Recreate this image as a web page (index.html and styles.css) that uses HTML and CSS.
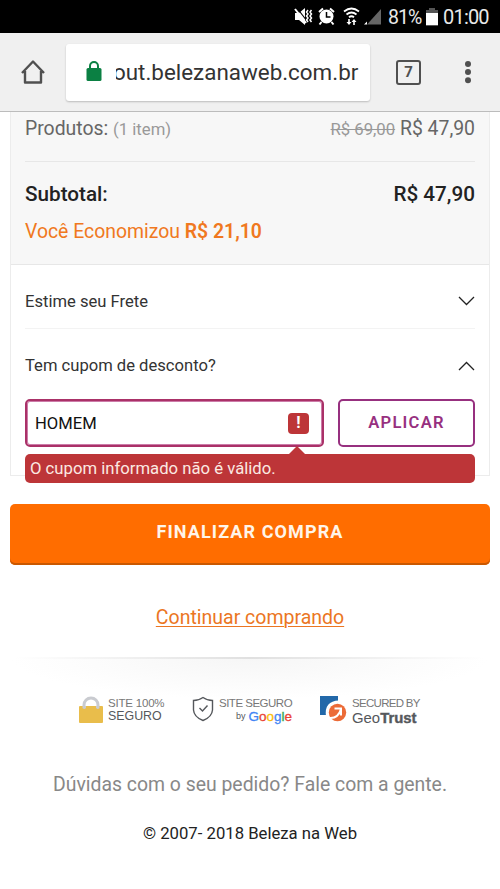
FILE: index.html
```html
<!DOCTYPE html>
<html lang="pt-BR">
<head>
<meta charset="utf-8">
<title>Beleza na Web</title>
<link rel="stylesheet" href="styles.css">
</head>
<body>
<header class="status">
  <svg class="status-icons" width="92" height="20" viewBox="0 0 92 20">
    <g fill="#fff">
      <path d="M1 6h4l6-5v17l-6-5H1z"/>
      <path d="M3 1l10 13" stroke="#000" stroke-width="1.200"/>
      <path d="M1 2l11 14" stroke="#fff" stroke-width="2"/>
      <path d="M14 3l-1.500 2 1.500 2-1.500 2 1.500 2-1.500 2 1.500 2M17.500 3l-1.500 2 1.500 2-1.500 2 1.500 2-1.500 2 1.500 2" fill="none" stroke="#fff" stroke-width="1.500"/>
      <circle cx="32.500" cy="9.500" r="7"/>
      <path d="M25 5l4-3.500M40 5l-4-3.500M27.500 15l-2 2.500M37.500 15l2 2.500" stroke="#fff" stroke-width="2"/>
      <path d="M32.500 5v5h4" fill="none" stroke="#000" stroke-width="1.500"/>
      <path d="M50 4.500q7.500-6 15 0M52.500 7.500q5-4 10 0M55 10.300q2.500-2 5 0" fill="none" stroke="#fff" stroke-width="1.800"/>
      <path d="M52.500 15h1.700v-3h1.600v3h1.700L55 18zM57.500 15l2.500-3 2.500 3h-1.700v3h-1.600v-3z"/>
      <path d="M73 17.500L87 2v15.500z" fill="#666"/>
      <path d="M70 17.500l3-3v3z"/>
    </g>
  </svg>
  <span class="percent">81%</span>
  <svg class="battery" width="12" height="18" viewBox="0 0 12 18"><path d="M0 2h3V0h6v2h3v16H0z" fill="#555"/><path d="M0 5h12v12H0z" fill="#fff"/></svg>
  <span class="clock">01:00</span>
</header>
<nav class="toolbar">
  <svg class="home" width="26" height="26" viewBox="0 0 26 26"><path d="M2 14L13 2.500 24 14M5 12v11.500h16V12" fill="none" stroke="#505050" stroke-width="2.400" stroke-linejoin="round"/></svg>
  <div class="address">
    <svg class="lock" width="16" height="20" viewBox="0 0 16 20"><path d="M4 9V5a4 4 0 0 1 8 0v4" fill="none" stroke="#0b8043" stroke-width="2"/><rect x=".5" y="7" width="15" height="13" rx="1.500" fill="#0b8043"/></svg>
    <span class="url">out.belezanaweb.com.br</span>
  </div>
  <span class="tabs">7</span>
  <svg class="menu" width="8" height="24" viewBox="0 0 8 24" fill="#505050"><circle cx="4" cy="4" r="3"/><circle cx="4" cy="12" r="3"/><circle cx="4" cy="20.300" r="3"/></svg>
</nav>
<main>
  <section class="card">
    <div class="summary">
      <div class="row products"><span class="label">Produtos: <small>(1 item)</small></span><span class="amount"><s>R$ 69,00</s> R$ 47,90</span></div>
      <div class="row subtotal"><span class="sub-label">Subtotal:</span><span class="sub-value">R$ 47,90</span></div>
      <p class="savings">Você Economizou <b>R$ 21,10</b></p>
    </div>
    <div class="options">
      <div class="row option shipping"><span class="ship-label">Estime seu Frete</span><svg width="17" height="10" viewBox="0 0 17 10"><path d="M1 1l7.500 7.500L16 1"/></svg></div>
      <div class="row option coupon"><span class="coupon-label">Tem cupom de desconto?</span><svg width="17" height="10" viewBox="0 0 17 10"><path d="M1 9l7.500-7.500L16 9"/></svg></div>
      <div class="form">
        <div class="field"><span class="code">HOMEM</span><span class="alert">!</span></div>
        <button class="apply"><span>APLICAR</span></button>
      </div>
      <div class="error"><span>O cupom informado não é válido.</span></div>
    </div>
  </section>
  <button class="checkout"><span>FINALIZAR COMPRA</span></button>
  <div class="continue"><a>Continuar comprando</a></div>
</main>
<footer>
  <div class="seals">
    <div class="seal safe">
      <svg width="24" height="28" viewBox="0 0 24 28"><path d="M5 13V9a7 7 0 0 1 14 0v4" fill="none" stroke="#c9cbd0" stroke-width="3"/><rect y="10" width="24" height="17" rx="1" fill="#e9bd4b"/><path d="M3.500 10v2q2 2 3.500 0v-2M17 10v2q2 2 3.500 0v-2" fill="#c9cbd0"/></svg>
      <div class="seal-text"><span class="s1">SITE 100%</span><span class="s2">SEGURO</span></div>
    </div>
    <div class="seal google">
      <svg width="22" height="26" viewBox="0 0 22 26" fill="none" stroke="#55585c" stroke-width="1.400"><path d="M11 1.500Q15 4.500 20.500 4.500V14Q20 21 11 24.500 2 21 1.500 14V4.500Q7 4.500 11 1.500zM7.500 12l3 3 5-5.500"/></svg>
      <div class="seal-text"><span class="s3">SITE SEGURO</span><span class="s4"><small>by</small><span class="logo"><i class="b">G</i><i class="r">o</i><i class="y">o</i><i class="b">g</i><i class="g">l</i><i class="r">e</i></span></span></div>
    </div>
    <div class="seal geo">
      <svg width="27" height="26" viewBox="0 0 27 26"><path d="M0 0h18v5Q7 6 7 19H0z" fill="#2268a9"/><path d="M7 20Q5 6 19 5.500" fill="none" stroke="#fff" stroke-width="2"/><circle cx="17.500" cy="16.500" r="8.700" fill="#ec6b37"/><path d="M9 22q9 1 12-9M14.500 12.500H21v7" fill="none" stroke="#fff" stroke-width="2"/></svg>
      <div class="seal-text"><span class="s5">SECURED BY</span><span class="s6">Geo<b>Trust</b></span></div>
    </div>
  </div>
  <p class="help"><span>Dúvidas com o seu pedido? Fale com a gente.</span></p>
  <p class="copy"><span>© 2007- 2018 Beleza na Web</span></p>
</footer>
</body>
</html>
```
FILE: styles.css
```css
* { box-sizing: border-box; }
body { margin: 0; width: 500px; height: 889px; overflow: hidden; background: #fff; color: #222; font-family: Roboto, sans-serif; }
p { margin: 0; }
svg { flex: none; display: block; }
button { font-family: inherit; margin: 0; padding: 0; }
span, a { white-space: nowrap; }

.status { height: 33px; background: #000; color: #e9e9e9; display: flex; align-items: center; padding: 1px 0 0 294px; font-size: 20px; }
.percent { margin-left: 2px; width: 38px; font-size: 19.500px; letter-spacing: -.9px; }
.clock { margin-left: 5px; letter-spacing: -.8px; }

.toolbar { height: 79px; padding-left: 20px; display: flex; align-items: center; background: #f0f0f0; border-bottom: 1px solid #bcbcbc; }
.address { width: 304px; height: 57px; margin-left: 20px; padding-left: 20px; display: flex; align-items: center; background: #fff; border-radius: 3px; box-shadow: 0 1px 2px rgba(0,0,0,.22); }
.lock { margin-top: -2px; }
.url { position: relative; margin-left: 11px; font-size: 22.400px; color: #333; line-height: 30px; }
.url::before { content: ""; position: absolute; left: 0; top: 0; width: 3px; height: 30px; background: #fff; }
.tabs { width: 25px; height: 25px; margin-left: 26px; border: 2.500px solid #505050; border-radius: 3px; font-size: 15px; font-weight: 700; line-height: 21px; text-align: center; color: #505050; }
.menu { margin-left: 43px; }

.card { height: 364px; margin: 0 10px; border: 1px solid #ececec; border-top: 0; }
.row { display: flex; justify-content: space-between; align-items: center; }
.summary { height: 153px; padding: 0 14px; background: #f7f7f7; border-bottom: 1px solid #e7e7e7; }
.products { height: 50px; padding-bottom: 17px; border-bottom: 1px solid #e7e7e7; color: #666; font-size: 19.400px; }
.products small { font-size: 16.700px; color: #999; }
.products s { font-size: 16.700px; color: #999; }
.subtotal { height: 65px; padding-bottom: 1px; font-size: 20.700px; font-weight: 500; color: #222; }
.savings { line-height: 24px; margin-top: -7px; font-size: 19.400px; color: #f07820; }
.savings b { font-weight: 600; }
.options { padding: 0 14px; }
.option { font-size: 16.600px; color: #333; }
.option svg { fill: none; stroke: #222; stroke-width: 1.300; }
.option.shipping { height: 64px; padding-top: 9px; border-bottom: 1px solid #f3f3f3; }
.option.coupon { height: 70px; padding-top: 3px; }
.form { display: flex; gap: 14px; }
.field { width: 299px; height: 48px; display: flex; align-items: center; justify-content: space-between; padding: 0 13px 0 8px; border: 2px solid #aa3168; border-radius: 5px; box-shadow: inset 0 0 0 1px #cc7ba8; font-size: 16.600px; color: #111; }
.alert { width: 21px; height: 21px; border-radius: 4px; background: #bd3538; color: #fff; font-size: 16px; font-weight: 700; line-height: 20px; text-align: center; }
.apply { width: 137px; height: 48px; padding-bottom: 2px; border: 2px solid #97307f; border-radius: 5px; background: #fff; color: #97307f; font-size: 16.600px; font-weight: 600; letter-spacing: 1.200px; }
.error { position: relative; height: 29px; margin-top: 7px; padding-left: 5px; border-radius: 5px; background: #bd3538; color: #fbe9e2; font-size: 16.700px; line-height: 29px; }
.error::before { content: ""; position: absolute; left: 264px; top: -8px; border: 8px solid transparent; border-top: 0; border-bottom-color: #bd3538; }
.checkout { display: block; width: 480px; height: 61px; margin: 28px 0 0 10px; padding-bottom: 7px; border: 0; border-radius: 5px; background: #ff6d00; box-shadow: inset 0 -2px #ca5800; color: #fff5e9; font-size: 18px; font-weight: 700; letter-spacing: 1.100px; }
.continue { height: 92px; padding-top: 41px; text-align: center; font-size: 19.500px; line-height: 24px; color: #eb7623; }
.continue a { text-decoration: underline; text-decoration-thickness: 1px; text-underline-offset: 2px; }

footer { height: 232px; background: radial-gradient(ellipse 240px 42px at 50% 0, #f6f6f6, #fff); }
footer::before { content: ""; display: block; height: 2px; background: linear-gradient(90deg, #fff 3%, #e0e0e0 50%, #fff 97%); }
.seals { height: 66px; display: flex; padding: 37px 0 0 79px; font-family: "Liberation Sans", sans-serif; color: #55585c; }
.seal { display: flex; align-items: flex-start; }
.safe { width: 113px; gap: 5px; }
.google { width: 128px; gap: 5px; }
.geo { gap: 5px; }
.seal-text { display: flex; flex-direction: column; align-items: flex-start; padding-top: 1px; font-size: 12px; line-height: 13px; }
.s1, .s3, .s5 { font-size: 11.500px; letter-spacing: -.2px; color: #777; }
.s2 { font-size: 12.400px; }
.s3 { letter-spacing: -.5px; }
.s5 { letter-spacing: -.7px; }
.google .seal-text { width: 73px; }
.s4 { align-self: flex-end; display: flex; align-items: center; gap: 3px; }
.s4 small { font-size: 9px; }
.logo { display: flex; font-size: 13.500px; }
.logo i { font-style: normal; -webkit-text-stroke: .3px; }
.b { color: #4285f4; } .r { color: #ea4335; } .y { color: #fbbc05; } .g { color: #34a853; }
.s6 { font-size: 14.900px; line-height: 16px; }
.s6 b { -webkit-text-stroke: .4px; }
.help { margin-top: 47px; text-align: center; font-size: 19.400px; line-height: 26px; color: #888; }
.copy { margin-top: 24px; text-align: center; font-size: 16.700px; line-height: 24px; color: #222; }
```
